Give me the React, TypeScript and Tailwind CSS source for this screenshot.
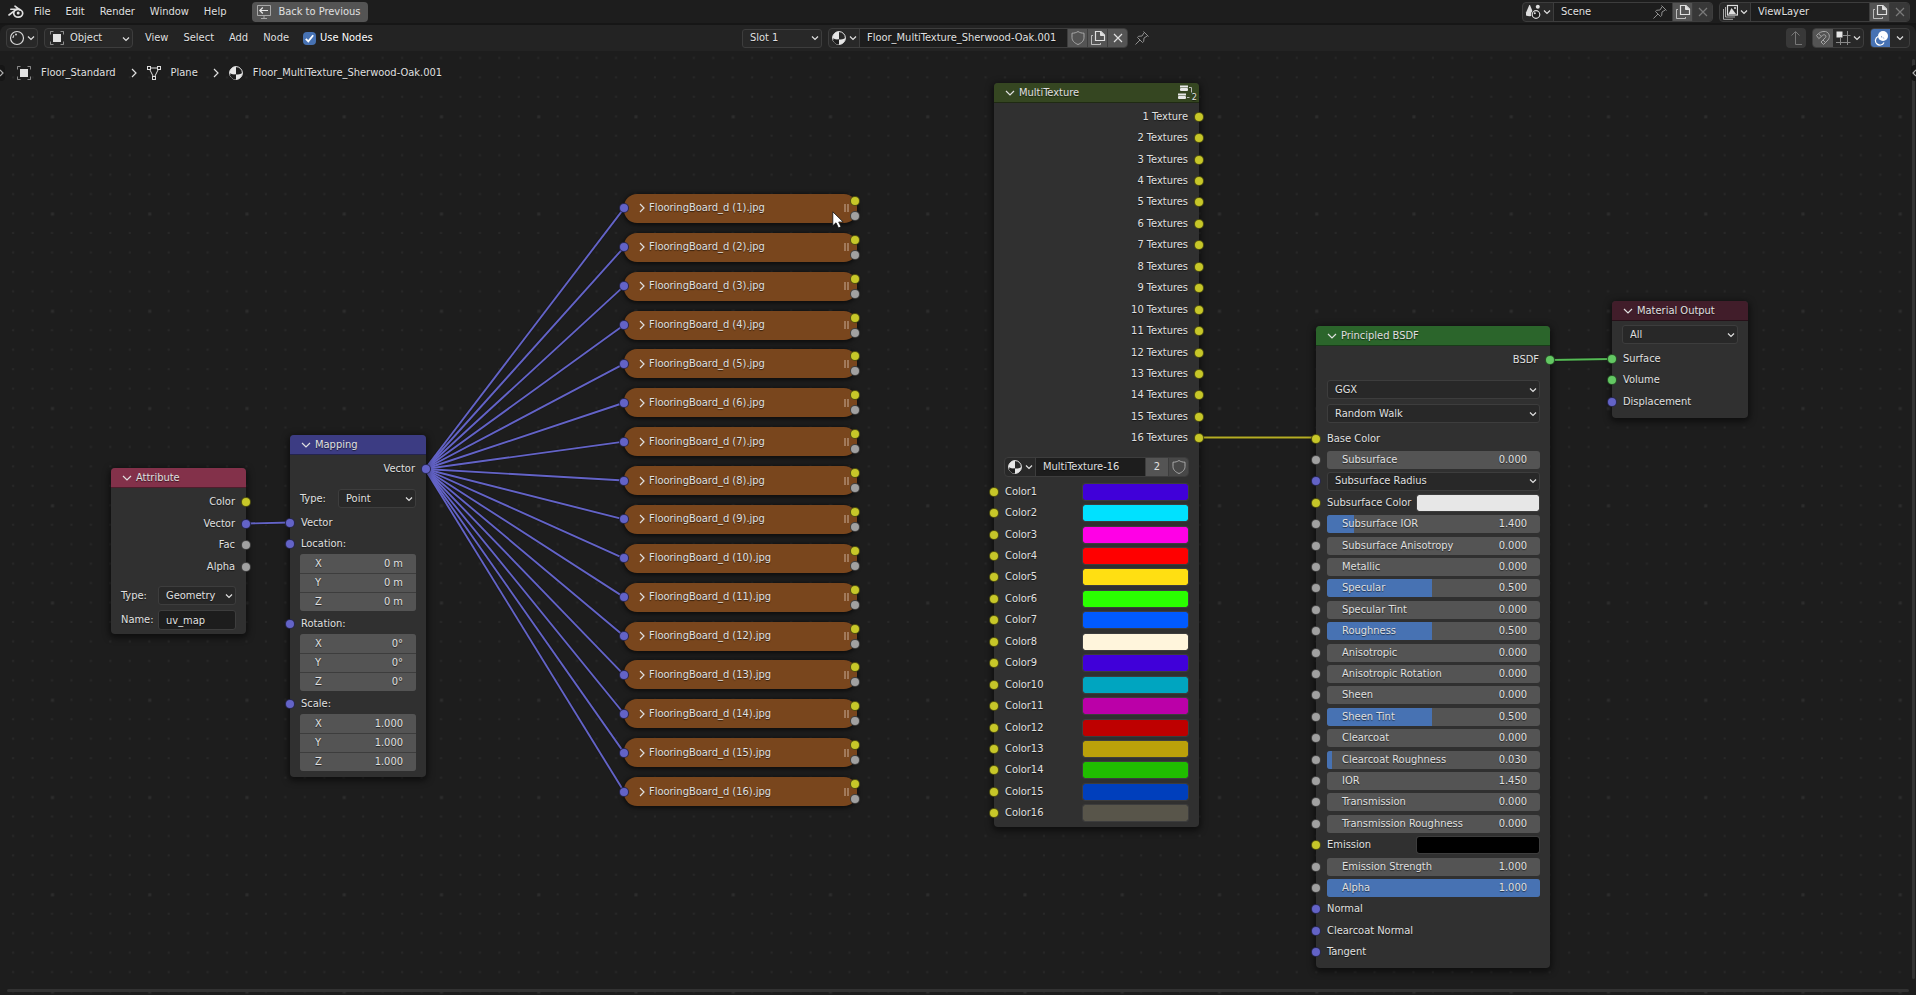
import React from "react";
import type { ReactNode } from "react";

type SocketKind = "color" | "vector" | "value" | "shader";

const socketFill: Record<SocketKind, string> = {
  color: "bg-[#c7c729]",
  vector: "bg-[#6363c7]",
  value: "bg-[#a1a1a1]",
  shader: "bg-[#63c763]",
};

const textShadow = "[text-shadow:0_1px_1px_rgba(0,0,0,0.6)]";

/* ---------- icons ---------- */

function Svg({ children, size = 16, className = "" }: { children: ReactNode; size?: number; className?: string }) {
  return (
    <svg width={size} height={size} viewBox="0 0 16 16" fill="none" stroke="currentColor" className={`shrink-0 ${className}`} aria-hidden="true">
      {children}
    </svg>
  );
}

const Chevron = ({ className = "" }: { className?: string }) => (
  <svg width="8" height="8" viewBox="0 0 8 8" fill="none" stroke="currentColor" strokeWidth="1.2" className={`shrink-0 ${className}`} aria-hidden="true">
    <path d="M1 2.5 4 5.5 7 2.5" />
  </svg>
);

const BlenderLogo = () => (
  <Svg className="text-[#e0e0e0]">
    <path d="M1 11 8.6 5.2M2.8 5.3H10M7 2.2l5 3.8" strokeWidth="1.6" strokeLinecap="round" />
    <ellipse cx="10.2" cy="9.3" rx="4.5" ry="3.9" strokeWidth="1.7" />
    <circle cx="10.2" cy="9.1" r="1.5" fill="currentColor" stroke="none" />
  </Svg>
);

const BackScreen = () => (
  <Svg className="text-[#c4c4c4]">
    <path d="M1.500 1.500H14.500V11.500H1.500ZM5 14.500H11M8 12V14" opacity=".75" />
    <path d="M12 6.500H4M6.800 3.500 3.800 6.500 6.800 9.500" strokeWidth="1.200" className="stroke-[#e6e6e6]" />
  </Svg>
);

const ShaderBall = () => (
  <Svg className="text-[#d8d8d8]">
    <circle cx="8" cy="8" r="6.500" strokeWidth="1.200" />
    <path d="M4 8A4 4 0 0 1 5 5.300" strokeWidth="1.200" />
    <circle cx="7" cy="4.500" r="1" fill="currentColor" stroke="none" />
  </Svg>
);

const ObjectIcon = () => (
  <Svg className="text-[#e2e2e2]">
    <rect x="4" y="4" width="8" height="8" fill="currentColor" stroke="none" />
    <path d="M1.500 4.500v-3h3M11.500 1.500h3v3M14.500 11.500v3h-3M4.500 14.500h-3v-3" opacity=".55" />
  </Svg>
);

const MeshIcon = () => (
  <Svg className="text-[#dcdcdc]">
    <path d="M3 3H13L8 13Z" strokeWidth="1" />
    <rect x="1.500" y="1.500" width="3" height="3" className="fill-[#1d1d1d]" />
    <rect x="11.500" y="1.500" width="3" height="3" className="fill-[#1d1d1d]" />
    <rect x="6.500" y="11.500" width="3" height="3" className="fill-[#1d1d1d]" />
  </Svg>
);

const MaterialIcon = () => (
  <Svg className="text-[#e6e6e6]">
    <circle cx="8" cy="8" r="6.400" strokeWidth="1" />
    <path d="M8 8V1.600A6.400 6.400 0 0 0 1.600 8c1.900 1.200 4 1.600 6.400 1.600ZM8 8v1.600c2.400 0 4.500-.4 6.400-1.600A6.400 6.400 0 0 1 8 14.400Z" fill="currentColor" stroke="none" />
    <path d="M8 9.600v4.800c-3 0-5.500-2-6.300-5 1.900.6 4 .8 6.300.2Z" className="fill-[#1d1d1d]" stroke="none" />
  </Svg>
);

const ShieldIcon = () => (
  <Svg className="text-[#a8a8a8]">
    <path d="M8 1.500C6.300 2.700 4.200 3.200 2 3.200v4.300c0 3.300 2.500 5.600 6 7 3.500-1.400 6-3.700 6-7V3.200c-2.200 0-4.300-.5-6-1.700Z" />
  </Svg>
);

const CopyIcon = () => (
  <Svg className="text-[#e0e0e0]">
    <path d="M5.500 1.500h5.500l3.500 3.500v5.500h-9Z" strokeWidth="1.200" />
    <path d="M10.500 1.500v4h4" fill="currentColor" />
    <path d="M3 5.500H1.500v9h9V13" opacity=".75" />
  </Svg>
);

const CrossIcon = ({ dim = false }: { dim?: boolean }) => (
  <Svg className={dim ? "text-[#7a7a7a]" : "text-[#e0e0e0]"}>
    <path d="m4 4 8 8M12 4l-8 8" strokeWidth="1.200" />
  </Svg>
);

const PinIcon = () => (
  <Svg className="text-[#8f8f8f]">
    <path d="m9.500 1.500 5 5M10.200 2.500 8 6 4.500 6.300 3.500 7.500l5 5 1.200-1L10 8l3.500-2.200M6 10l-4.500 4.500" />
  </Svg>
);

const SceneIcon = () => (
  <Svg className="text-[#dedede]">
    <path d="M5 1 8 8.500v3a5 2 0 0 1-7 0v-3L4.300 1Z" fill="currentColor" stroke="none" />
    <circle cx="12.800" cy="2.700" r="2" fill="currentColor" stroke="none" />
    <circle cx="11" cy="10.500" r="5" className="fill-[#1d1d1d]" stroke="none" />
    <circle cx="11" cy="10.500" r="3.800" strokeWidth="1.200" />
    <circle cx="9.800" cy="9.300" r="1" fill="currentColor" stroke="none" />
  </Svg>
);

const LayersIcon = () => (
  <Svg className="text-[#dedede]">
    <path d="M3.500 3v10H13M1.500 5v10.300H11" opacity=".7" />
    <rect x="5.500" y="1.500" width="10" height="9.500" strokeWidth="1.200" />
    <path d="M6.500 10 9.500 4l4.500 6Z" fill="currentColor" stroke="none" />
    <circle cx="13" cy="4" r="1" fill="currentColor" stroke="none" />
  </Svg>
);

const UpIcon = () => (
  <Svg className="text-[#777777]">
    <path d="M7.500 2v12.500H14M3.500 5.500l4-4 4 4" />
  </Svg>
);

const MagnetIcon = () => (
  <Svg className="text-[#a5a5a5]">
    <path d="M1.500 5.500C4 2.500 7 1 10.500 1.500c4 1 5 5.500 2.500 8.500l-4.500 4.500-2.500-2.500 4.300-4.300c1-1 .7-2.400-.5-2.800-1-.3-1.800 0-2.600.8L3.800 8.600ZM3.500 3.700l2.500 2.500M8 10l2.500 2.500" />
  </Svg>
);

const SnapGridIcon = () => (
  <Svg className="text-[#8a8a8a]">
    <path d="M5.500 8v7M12.500 1v14M8 5.500h7.500M1 12.500h14.500" />
    <rect x="1.500" y="1.500" width="6" height="6" fill="#e6e6e6" stroke="none" />
  </Svg>
);

const OverlayIcon = () => (
  <Svg className="text-white">
    <circle cx="10" cy="6" r="5" fill="currentColor" stroke="none" />
    <path d="M5 6.500a4.500 4.500 0 1 0 6 6" strokeWidth="1.200" />
    <path d="M8 6.700a4 4 0 0 1 3 2" stroke="#4772b3" strokeWidth="1" strokeDasharray="1 1" />
  </Svg>
);

const GroupIcon = () => (
  <svg width="20" height="16" viewBox="0 0 20 16" fill="none" className="shrink-0" aria-hidden="true">
    <rect x="3" y="0.500" width="8" height="2" fill="#e8e8e8" />
    <rect x="3" y="3" width="8" height="3" rx="1" fill="#e8e8e8" />
    <rect x="1" y="8.500" width="8" height="2" fill="#e8e8e8" />
    <rect x="1" y="11" width="8" height="3" rx="1" fill="#e8e8e8" />
    <path d="M12 2.500h2.500v5M10 12.500h2.500" stroke="#b8b8b8" />
  </svg>
);

/* ---------- editor canvas pieces ---------- */

function Socket({ kind, side }: { kind: SocketKind; side: "in" | "out" }) {
  return (
    <span
      className={`absolute top-1/2 size-[10px] -translate-y-1/2 rounded-full border border-black/60 ${socketFill[kind]} ${
        side === "in" ? "-left-[5px]" : "-right-[5px]"
      }`}
    />
  );
}

function Node({ title, tone, place, children, badge }: { title: string; tone: string; place: string; children: ReactNode; badge?: ReactNode }) {
  return (
    <section className={`absolute flex flex-col rounded bg-[#303030] shadow-[0_2px_6px_2px_rgba(0,0,0,0.5)] ${place}`}>
      <header className={`flex h-5 shrink-0 items-center gap-1 rounded-t border-b border-black/40 pl-[11px] ${tone}`}>
        <svg width="10" height="8" viewBox="0 0 10 8" fill="none" stroke="currentColor" strokeWidth="1.2" aria-hidden="true">
          <path d="M1 2 5 6 9 2" />
        </svg>
        <h2>{title}</h2>
        {badge}
      </header>
      {children}
    </section>
  );
}

function Output({ name, kind }: { name: string; kind: SocketKind }) {
  return (
    <li className="relative flex min-h-[21px] items-center justify-end px-[11px]">
      {name}
      <Socket kind={kind} side="out" />
    </li>
  );
}

function Input({ name, kind, children }: { name?: string; kind: SocketKind; children?: ReactNode }) {
  return (
    <li className="relative flex min-h-[21px] items-center justify-between pl-[11px] pr-2.5">
      {name && <span>{name}</span>}
      {children}
      <Socket kind={kind} side="in" />
    </li>
  );
}

function Select({ label, options, className = "" }: { label: string; options: string[]; className?: string }) {
  return (
    <div className={`relative h-[19px] ${className}`}>
      <select aria-label={label} className={`h-full w-full appearance-none rounded-[3px] border border-[#3d3d3d] bg-[#282828] pl-[7px] pr-4 text-[#e0e0e0] ${textShadow}`}>
        {options.map((o) => (
          <option key={o}>{o}</option>
        ))}
      </select>
      <Chevron className="pointer-events-none absolute right-[3px] top-1/2 -translate-y-1/2" />
    </div>
  );
}

function Vector({ title, values }: { title: string; values: string[] }) {
  return (
    <div className="mx-2.5 flex flex-col gap-px overflow-hidden rounded-[3px] bg-[#3d3d3d]">
      {["X", "Y", "Z"].map((axis, i) => (
        <label key={axis} className="flex h-[18px] items-center justify-between bg-[#545454] pl-[15px] pr-[13px] first:h-[19px]">
          {axis}
          <input aria-label={`${title} ${axis}`} defaultValue={values[i]} className={`w-16 bg-transparent text-right ${textShadow}`} />
        </label>
      ))}
    </div>
  );
}

function Swatch({ label, color, className }: { label: string; color: string; className: string }) {
  return (
    <button type="button" aria-label={label} className={`h-[18px] rounded-[3px] border border-[#3d3d3d] bg-clip-padding ${className}`} style={{ backgroundColor: color }} />
  );
}

function Slider({ name, value, fill }: { name: string; value: string; fill: number }) {
  return (
    <label className="relative flex h-[18px] w-full items-center justify-between overflow-hidden rounded-[3px] bg-[#545454] pl-[15px] pr-[13px]">
      <span className="absolute inset-y-0 left-0 bg-[#4772b3]" style={{ width: `${fill}%` }} />
      <span className="relative">{name}</span>
      <span className="relative">{value}</span>
      <input type="range" min={0} max={100} defaultValue={fill} className="absolute inset-0 w-full opacity-0" />
    </label>
  );
}

/* ---------- data ---------- */

const groupColors = [
  "#4000d9", "#00e1ff", "#ff00e6", "#ff0000", "#ffdf12", "#2aff00", "#005aff", "#fff5dc",
  "#4000d9", "#00a5c0", "#bb00a8", "#be0000", "#bba10a", "#20bd00", "#003fbc", "#58554a",
];

const slidersTop = [
  ["Subsurface IOR", "1.400", 12.6], ["Subsurface Anisotropy", "0.000", 0], ["Metallic", "0.000", 0],
  ["Specular", "0.500", 49.5], ["Specular Tint", "0.000", 0], ["Roughness", "0.500", 49.5],
  ["Anisotropic", "0.000", 0], ["Anisotropic Rotation", "0.000", 0], ["Sheen", "0.000", 0],
  ["Sheen Tint", "0.500", 49.5], ["Clearcoat", "0.000", 0], ["Clearcoat Roughness", "0.030", 2.4],
  ["IOR", "1.450", 0], ["Transmission", "0.000", 0], ["Transmission Roughness", "0.000", 0],
] as const;

const boards = Array.from({ length: 16 }, (_, i) => i + 1);
const boardPitch = 38.875;

function Links() {
  const wires: [number, number, number, number, string][] = [
    [247, 523.5, 290, 522.5, "#6363c7"],
    ...boards.map((_, i) => [425, 469, 624, 208.4 + i * boardPitch, "#6363c7"] as [number, number, number, number, string]),
    [1199, 437.5, 1316, 437.5, "#b5ad24"],
    [1549, 360, 1612, 359, "#55bb55"],
  ];
  return (
    <svg className="absolute inset-0 h-full w-full" aria-hidden="true">
      <defs>
        <pattern id="dots" width="97.25" height="97.25" patternUnits="userSpaceOnUse" x="3" y="16.3">
          {[0, 1, 2, 3, 4].map((r) =>
            [0, 1, 2, 3, 4].map((c) => {
              const major = r === 2 && c === 2;
              return (
                <rect key={`${r}${c}`} x={9.1 + c * 19.45} y={9.1 + r * 19.45} width={major ? 3 : 2} height={major ? 3 : 2} fill={major ? "#2d2d2d" : "#282828"} />
              );
            }),
          )}
        </pattern>
      </defs>
      <rect width="100%" height="100%" fill="url(#dots)" />
      <g transform="translate(0 -51)">
        {wires.map(([x1, y1, x2, y2], i) => (
          <line key={i} x1={x1} y1={y1} x2={x2} y2={y2} stroke="#141414" strokeWidth="3.400" strokeOpacity=".6" />
        ))}
        {wires.map(([x1, y1, x2, y2, stroke], i) => (
          <line key={i} x1={x1} y1={y1} x2={x2} y2={y2} stroke={stroke} strokeWidth="1.900" />
        ))}
      </g>
    </svg>
  );
}

/* ---------- header pieces ---------- */

const group = "flex h-5 shrink-0 overflow-hidden rounded border border-[#3d3d3d] bg-[#282828]";
const cell = "flex w-5 items-center justify-center border-l border-[#3d3d3d]";

function DataBlock({ name, icon, width, children }: { name: string; icon: ReactNode; width: string; children: ReactNode }) {
  return (
    <div className={`${group} ${width}`}>
      <button type="button" aria-label={`Browse ${name}`} className="flex w-[30px] shrink-0 items-center justify-center gap-0.5">
        {icon}
        <Chevron />
      </button>
      <input aria-label="Name" defaultValue={name} className={`min-w-0 flex-1 border-l border-[#3d3d3d] bg-[#1d1d1d] pl-[7px] ${textShadow}`} />
      {children}
    </div>
  );
}

const CrumbArrow = () => (
  <svg width="8" height="10" viewBox="0 0 8 10" fill="none" stroke="currentColor" strokeWidth="1.200" className="ml-3.5" aria-hidden="true">
    <path d="m2 1 4 4-4 4" />
  </svg>
);

export default function App() {
  return (
    <div className={`flex min-h-screen flex-col overflow-hidden bg-[#181818] font-['DejaVu_Sans_Condensed','DejaVu_Sans',sans-serif] text-[11px] leading-4 text-[#e0e0e0] ${textShadow}`}>
      <header className="flex h-[25px] items-center justify-between border-b-2 border-[#161616] bg-[#1d1d1d] px-1.5">
        <nav className="flex items-center">
          <a href="#blender" aria-label="Blender" className="ml-0.5 mr-2.5">
            <BlenderLogo />
          </a>
          <ul className="flex gap-[15px]">
            {["File", "Edit", "Render", "Window", "Help"].map((m) => (
              <li key={m}>
                <a href={`#${m}`}>{m}</a>
              </li>
            ))}
          </ul>
          <button type="button" className="ml-[26px] flex h-5 items-center gap-1.5 rounded bg-[#545454] pl-1 pr-2">
            <BackScreen />
            Back to Previous
          </button>
        </nav>
        <div className="flex gap-1.5">
          <DataBlock name="Scene" icon={<SceneIcon />} width="w-[191px]">
            <span className="flex w-5 items-center bg-[#1d1d1d]">
              <PinIcon />
            </span>
            <button type="button" aria-label="New scene" className={`${cell} bg-[#545454]`}><CopyIcon /></button>
            <button type="button" aria-label="Delete scene" className={`${cell} bg-[#383838]`}><CrossIcon dim /></button>
          </DataBlock>
          <DataBlock name="ViewLayer" icon={<LayersIcon />} width="w-[191px]">
            <button type="button" aria-label="New layer" className={`${cell} bg-[#545454]`}><CopyIcon /></button>
            <button type="button" aria-label="Delete layer" className={`${cell} bg-[#383838]`}><CrossIcon dim /></button>
          </DataBlock>
        </div>
      </header>

      <div className="grid h-[26px] grid-cols-[1fr_auto_1fr] items-center rounded-t-lg bg-[#232323] px-1.5">
        <div className="flex items-center">
          <button type="button" aria-label="Editor type" className={`${group} w-8 items-center justify-center gap-0.5`}>
            <ShaderBall />
            <Chevron />
          </button>
          <div className={`${group} relative ml-1.5 w-[89px] items-center pl-1`}>
            <ObjectIcon />
            <select aria-label="Shader type" className={`absolute inset-0 appearance-none pl-[25px] ${textShadow}`}>
              <option>Object</option>
            </select>
            <Chevron className="pointer-events-none absolute right-0.5 top-1.5" />
          </div>
          <ul className="ml-3 mr-3.5 flex gap-[15px]">
            {["View", "Select", "Add", "Node"].map((m) => (
              <li key={m}>
                <a href={`#${m}`}>{m}</a>
              </li>
            ))}
          </ul>
          <label className="flex items-center gap-1 text-white">
            <span className="relative flex size-[13px]">
              <input type="checkbox" defaultChecked className="size-[13px] appearance-none rounded-sm bg-[#4772b3]" />
              <svg width="13" height="13" viewBox="0 0 13 13" fill="none" stroke="white" strokeWidth="1.800" className="pointer-events-none absolute" aria-hidden="true">
                <path d="M2.800 6.800 5.300 9.300 10.200 3.300" />
              </svg>
            </span>
            Use Nodes
          </label>
        </div>

        <div className="flex items-center gap-1.5 pr-6">
          <Select label="Slot" options={["Slot 1"]} className="w-20" />
          <DataBlock name="Floor_MultiTexture_Sherwood-Oak.001" icon={<MaterialIcon />} width="w-[300px]">
            <button type="button" aria-label="Fake user" className={`${cell} bg-[#545454]`}><ShieldIcon /></button>
            <button type="button" aria-label="New material" className={`${cell} bg-[#545454]`}><CopyIcon /></button>
            <button type="button" aria-label="Unlink" className={`${cell} bg-[#545454]`}><CrossIcon /></button>
          </DataBlock>
          <button type="button" aria-label="Pin"><PinIcon /></button>
        </div>

        <div className="flex items-center justify-end gap-1.5">
          <button type="button" aria-label="Parent tree" className="flex size-5 items-center justify-center rounded bg-[#383838]"><UpIcon /></button>
          <div className={`${group} w-[52px]`}>
            <button type="button" aria-label="Snap" className="flex w-5 items-center justify-center bg-[#545454]"><MagnetIcon /></button>
            <button type="button" aria-label="Snap element" className="flex flex-1 items-center justify-center gap-0.5"><SnapGridIcon /><Chevron /></button>
          </div>
          <div className={`${group} w-10`}>
            <button type="button" aria-label="Overlays" className="flex w-[19px] items-center justify-center bg-[#4772b3]"><OverlayIcon /></button>
            <button type="button" aria-label="Overlay options" className="flex flex-1 items-center justify-center"><Chevron /></button>
          </div>
        </div>
      </div>

      <main className="relative flex-1 bg-[#1d1d1d]">
        <Links />

        <nav className="relative flex items-center pl-4 pt-3.5">
          <ObjectIcon />
          <span className="ml-[9px]">Floor_Standard</span>
          <CrumbArrow />
          <span className="ml-2"><MeshIcon /></span>
          <span className="ml-[9px]">Plane</span>
          <CrumbArrow />
          <span className="ml-2"><MaterialIcon /></span>
          <span className="ml-[9px]">Floor_MultiTexture_Sherwood-Oak.001</span>
        </nav>

        <Node title="Attribute" tone="bg-[#83314a]" place="left-[111px] top-[417px] w-[135px] pb-1">
          <ul className="mt-[3px] grid h-[87px] auto-rows-fr">
            <Output name="Color" kind="color" />
            <Output name="Vector" kind="vector" />
            <Output name="Fac" kind="value" />
            <Output name="Alpha" kind="value" />
          </ul>
          <div className="mt-2 flex items-center justify-between px-2.5">
            Type:
            <Select label="Type" options={["Geometry"]} className="w-[78px]" />
          </div>
          <label className="mt-[5px] flex items-center justify-between px-2.5">
            Name:
            <input defaultValue="uv_map" className={`h-5 w-[78px] rounded-[3px] border border-[#3d3d3d] bg-[#1d1d1d] pl-[7px] ${textShadow}`} />
          </label>
        </Node>

        <Node title="Mapping" tone="bg-[#3c3c83]" place="left-[290px] top-[384px] w-[136px] pb-1.5">
          <ul className="mt-[3px]">
            <Output name="Vector" kind="vector" />
          </ul>
          <div className="mb-1 mt-2.5 flex items-center justify-between px-2.5">
            Type:
            <Select label="Type" options={["Point"]} className="w-[78px]" />
          </div>
          <ul>
            <Input name="Vector" kind="vector" />
            <Input name="Location:" kind="vector" />
          </ul>
          <Vector title="Location" values={["0 m", "0 m", "0 m"]} />
          <ul className="mt-0.5">
            <Input name="Rotation:" kind="vector" />
          </ul>
          <Vector title="Rotation" values={["0°", "0°", "0°"]} />
          <ul className="mt-0.5">
            <Input name="Scale:" kind="vector" />
          </ul>
          <Vector title="Scale" values={["1.000", "1.000", "1.000"]} />
        </Node>

        <div className="absolute left-[624px] top-[138px] grid h-[622px] w-[233px] auto-rows-fr items-center">
          {boards.map((n) => (
            <section key={n} className="relative flex h-[29px] items-center gap-1 rounded-[13px] bg-[#79461d] pl-[15px] pr-2 shadow-[0_1px_4px_1px_rgba(0,0,0,0.6)]">
              <svg width="6" height="10" viewBox="0 0 6 10" fill="none" stroke="currentColor" strokeWidth="1.200" aria-hidden="true">
                <path d="m1 1 4 4-4 4" />
              </svg>
              <h2 className="flex-1">{`FlooringBoard_d (${n}).jpg`}</h2>
              <span className="h-2 w-[5px] border-x-2 border-[#a1795a]" />
              <Socket kind="vector" side="in" />
              <span className="absolute -right-[3px] top-0.5 size-[10px] rounded-full border border-black/60 bg-[#c7c729]" />
              <span className="absolute -right-[3px] bottom-0.5 size-[10px] rounded-full border border-black/60 bg-[#a1a1a1]" />
            </section>
          ))}
        </div>

        <Node
          title="MultiTexture"
          tone="bg-[#354621]"
          place="left-[994px] top-[32px] w-[205px] pb-[3px]"
          badge={
            <span className="relative ml-auto mr-0.5 flex">
              <GroupIcon />
              <span className="absolute right-0 top-1 text-[9px] leading-4">2</span>
            </span>
          }
        >
          <ul className="mt-[3px] grid h-[343px] auto-rows-fr">
            {boards.map((n) => (
              <Output key={n} name={n === 1 ? "1 Texture" : `${n} Textures`} kind="color" />
            ))}
          </ul>
          <div className="mb-1 mt-2 px-2.5">
            <DataBlock name="MultiTexture-16" icon={<MaterialIcon />} width="w-full">
              <button type="button" className="w-[23px] border-l border-[#3d3d3d] bg-[#545454]">2</button>
              <button type="button" aria-label="Fake user" className={`${cell} bg-[#484848]`}><ShieldIcon /></button>
            </DataBlock>
          </div>
          <ul className="grid h-[343px] auto-rows-fr">
            {groupColors.map((c, i) => (
              <Input key={i} name={`Color${i + 1}`} kind="color">
                <Swatch label={`Color${i + 1}`} color={c} className="w-[107px]" />
              </Input>
            ))}
          </ul>
        </Node>

        <Node title="Principled BSDF" tone="bg-[#2b652b]" place="left-[1316px] top-[275px] w-[234px] pb-[5px]">
          <ul className="mt-[3px]">
            <Output name="BSDF" kind="shader" />
          </ul>
          <Select label="Distribution" options={["GGX"]} className="ml-[11px] mr-2.5 mt-2.5" />
          <Select label="Subsurface method" options={["Random Walk"]} className="mb-[5px] ml-[11px] mr-2.5 mt-[5px]" />
          <ul className="grid h-[535px] auto-rows-fr">
            <Input name="Base Color" kind="color" />
            <Input kind="value"><Slider name="Subsurface" value="0.000" fill={0} /></Input>
            <Input kind="vector"><Select label="Subsurface Radius" options={["Subsurface Radius"]} className="w-full" /></Input>
            <Input name="Subsurface Color" kind="color"><Swatch label="Subsurface Color" color="#e7e7e7" className="w-[124px]" /></Input>
            {slidersTop.map(([n, v, f]) => (
              <Input key={n} kind="value"><Slider name={n} value={v} fill={f} /></Input>
            ))}
            <Input name="Emission" kind="color"><Swatch label="Emission" color="#000000" className="w-[124px]" /></Input>
            <Input kind="value"><Slider name="Emission Strength" value="1.000" fill={0} /></Input>
            <Input kind="value"><Slider name="Alpha" value="1.000" fill={100} /></Input>
            <Input name="Normal" kind="vector" />
            <Input name="Clearcoat Normal" kind="vector" />
            <Input name="Tangent" kind="vector" />
          </ul>
        </Node>

        <Node title="Material Output" tone="bg-[#411d2a]" place="left-[1612px] top-[250px] w-[136px] pb-[5px]">
          <Select label="Target" options={["All"]} className="mx-2.5 my-1" />
          <ul className="grid h-[65px] auto-rows-fr">
            <Input name="Surface" kind="shader" />
            <Input name="Volume" kind="shader" />
            <Input name="Displacement" kind="vector" />
          </ul>
        </Node>

        <svg width="12" height="18" viewBox="0 0 12 18" className="absolute left-[832px] top-[160px]" aria-hidden="true">
          <path d="M.8.8V14.800L4 11.800 6.500 17 9 15.800 6.700 11H11.200Z" fill="white" stroke="#111" strokeWidth=".8" />
        </svg>

        <button type="button" aria-label="Show toolbar" className="absolute left-0 top-3.5 flex h-4 w-[5px] items-center rounded-r bg-[#161616]">
          <svg width="4" height="8" viewBox="0 0 4 8" fill="none" stroke="#b0b0b0" strokeWidth="1.200" aria-hidden="true">
            <path d="M0 1 3 4 0 7" />
          </svg>
        </button>
        <div className="absolute bottom-4 right-px top-2 w-[3px] rounded bg-[#323232]" />
        <button type="button" aria-label="Show sidebar" className="absolute right-0 top-3.5 flex h-4 w-[5px] items-center justify-end rounded-l bg-[#161616]">
          <svg width="4" height="8" viewBox="0 0 4 8" fill="none" stroke="#b0b0b0" strokeWidth="1.200" aria-hidden="true">
            <path d="M4 1 1 4 4 7" />
          </svg>
        </button>
        <div className="absolute inset-x-[7px] bottom-[3px] h-[3px] rounded bg-[#323232]" />
      </main>
    </div>
  );
}
